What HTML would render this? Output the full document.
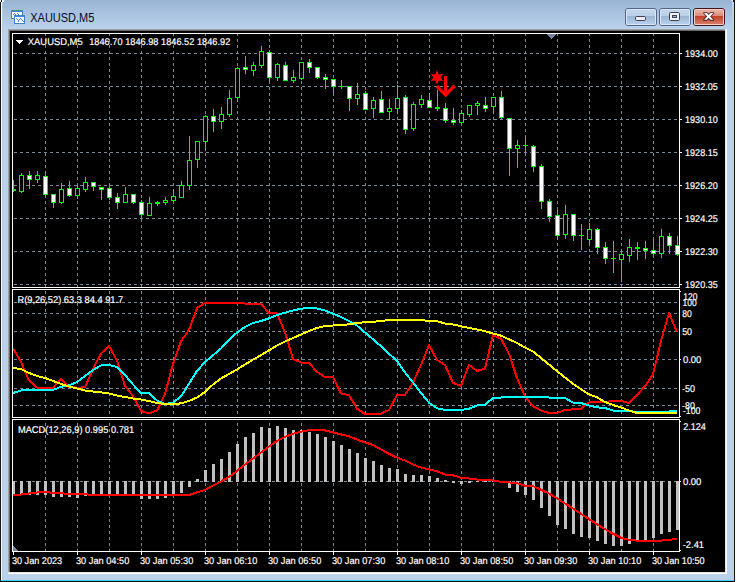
<!DOCTYPE html>
<html><head><meta charset="utf-8"><title>XAUUSD,M5</title>
<style>html,body{margin:0;padding:0;background:#fff;overflow:hidden}body{width:737px;height:582px;font-family:"Liberation Sans",sans-serif}</style></head>
<body>
<svg width="737" height="582" viewBox="0 0 737 582" font-family="'Liberation Sans', sans-serif" style="display:block"><defs><linearGradient id="tb" x1="0" y1="0" x2="0" y2="1"><stop offset="0" stop-color="#99b4d3"/><stop offset="1" stop-color="#bad2ec"/></linearGradient><linearGradient id="bt" x1="0" y1="0" x2="0" y2="1"><stop offset="0" stop-color="#c3d6ec"/><stop offset="1" stop-color="#bbd0e8"/></linearGradient><linearGradient id="bb" x1="0" y1="0" x2="0" y2="1"><stop offset="0" stop-color="#9ab3d1"/><stop offset="1" stop-color="#b6cfea"/></linearGradient><linearGradient id="ct" x1="0" y1="0" x2="0" y2="1"><stop offset="0" stop-color="#eab3a5"/><stop offset="1" stop-color="#d98b78"/></linearGradient><linearGradient id="cb" x1="0" y1="0" x2="0" y2="1"><stop offset="0" stop-color="#bf3f24"/><stop offset="1" stop-color="#d67c66"/></linearGradient></defs>
<g shape-rendering="crispEdges">
<rect x="0" y="0" width="737" height="582" fill="#ffffff"/>
<rect x="0" y="0" width="735" height="582" fill="#b9d1ea"/>
<rect x="0" y="0" width="735" height="29" fill="url(#tb)"/>
<rect x="0" y="2" width="1" height="580" fill="#161616"/>
<rect x="1" y="2" width="1" height="579" fill="#fbfdff"/>
<rect x="2" y="2" width="1" height="578" fill="#b2cae5"/>
<rect x="0" y="0" width="1" height="2" fill="#dfeaf6"/>
<rect x="1" y="0" width="1" height="2" fill="#202020"/>
<rect x="2" y="0" width="2" height="2" fill="#f4f8fc"/>
<rect x="732" y="0" width="1" height="580" fill="#c0cfe9"/>
<rect x="733" y="0" width="1" height="581" fill="#8fe4ff"/>
<rect x="734" y="0" width="1" height="582" fill="#141414"/>
<rect x="735" y="0" width="2" height="582" fill="#ffffff"/>
<rect x="733" y="0" width="1" height="2" fill="#101820"/>
<rect x="731" y="0" width="2" height="1" fill="#c8f2ff"/>
<rect x="2" y="579" width="731" height="1" fill="#bccfe9"/>
<rect x="1" y="580" width="733" height="1" fill="#38d4ff"/>
<rect x="0" y="581" width="735" height="1" fill="#101010"/>
<rect x="8" y="29" width="719" height="545" fill="#ffffff"/>
<rect x="8" y="29" width="718" height="544" fill="#e3e3e3"/>
<rect x="8" y="29" width="717" height="543" fill="#a0a0a0"/>
<rect x="9" y="30" width="716" height="542" fill="#696969"/>
<rect x="10" y="31" width="715" height="541" fill="#000000"/>
</g>
<rect x="625.5" y="8.5" width="31" height="17" rx="2.5" fill="#56668a" stroke="#56668a"/>
<rect x="626" y="9" width="30" height="16" rx="1.5" fill="#d9e6f4"/>
<rect x="627" y="10" width="28" height="6" fill="url(#bt)" shape-rendering="crispEdges"/>
<rect x="627" y="16" width="28" height="8" fill="url(#bb)" shape-rendering="crispEdges"/>
<rect x="659.5" y="8.5" width="31" height="17" rx="2.5" fill="#56668a" stroke="#56668a"/>
<rect x="660" y="9" width="30" height="16" rx="1.5" fill="#d9e6f4"/>
<rect x="661" y="10" width="28" height="6" fill="url(#bt)" shape-rendering="crispEdges"/>
<rect x="661" y="16" width="28" height="8" fill="url(#bb)" shape-rendering="crispEdges"/>
<rect x="693.5" y="8.5" width="31" height="17" rx="2.5" fill="#43121f" stroke="#43121f"/>
<rect x="694" y="9" width="30" height="16" rx="1.5" fill="#f3cfc6"/>
<rect x="695" y="10" width="28" height="6" fill="url(#ct)" shape-rendering="crispEdges"/>
<rect x="695" y="16" width="28" height="8" fill="url(#cb)" shape-rendering="crispEdges"/>
<rect x="635.5" y="16.5" width="10" height="4" rx="1.2" fill="#efefef" stroke="#3b4258"/>
<rect x="669.5" y="12.5" width="10" height="8" rx="1.2" fill="#f2f2f2" stroke="#3b4258"/>
<rect x="672.5" y="15.5" width="4" height="2" fill="#8fb0d8" stroke="#3b4258"/>
<polygon points="704.0,13.0 706.8,13.0 708.7,15.0 710.6,13.0 713.4,13.0 710.2,16.4 713.4,19.8 710.6,19.8 708.7,17.8 706.8,19.8 704.0,19.8 707.2,16.4" fill="#ffffff" stroke="#46222e" stroke-width="1.7" stroke-linejoin="round" paint-order="stroke"/>
<g shape-rendering="crispEdges">
<rect x="11" y="10" width="12" height="9" fill="#3f82ff"/>
<rect x="12" y="12" width="10" height="6" fill="#fffef4"/>
<rect x="13" y="14" width="1" height="1" fill="#3f82ff"/>
<rect x="14" y="13" width="1" height="1" fill="#3f82ff"/>
<rect x="15" y="14" width="1" height="1" fill="#3f82ff"/>
<rect x="17" y="13" width="1" height="1" fill="#3f82ff"/>
<rect x="18" y="14" width="1" height="1" fill="#3f82ff"/>
<rect x="19" y="15" width="1" height="1" fill="#3f82ff"/>
<rect x="12" y="10" width="1" height="1" fill="#2f8f6f"/>
<rect x="14" y="10" width="1" height="1" fill="#2f8f6f"/>
<rect x="16" y="10" width="1" height="1" fill="#2f8f6f"/>
<rect x="18" y="10" width="1" height="1" fill="#2f8f6f"/>
<rect x="20" y="10" width="1" height="1" fill="#2f8f6f"/>
<rect x="11" y="12" width="1" height="1" fill="#3a7f9a"/>
<rect x="22" y="12" width="1" height="1" fill="#3a7f9a"/>
<rect x="11" y="14" width="1" height="1" fill="#3a7f9a"/>
<rect x="22" y="14" width="1" height="1" fill="#3a7f9a"/>
<rect x="11" y="16" width="1" height="1" fill="#3a7f9a"/>
<rect x="22" y="16" width="1" height="1" fill="#3a7f9a"/>
<rect x="12" y="18" width="1" height="1" fill="#3a7f9a"/>
<rect x="14" y="15" width="11" height="9" fill="#3f82ff"/>
<rect x="15" y="17" width="9" height="6" fill="#ffffff"/>
<rect x="16" y="18" width="1" height="1" fill="#3f82ff"/>
<rect x="17" y="19" width="1" height="1" fill="#3f82ff"/>
<rect x="18" y="20" width="1" height="1" fill="#3f82ff"/>
<rect x="19" y="19" width="1" height="1" fill="#3f82ff"/>
<rect x="20" y="18" width="1" height="1" fill="#3f82ff"/>
<rect x="21" y="19" width="1" height="1" fill="#3f82ff"/>
<rect x="22" y="20" width="1" height="1" fill="#3f82ff"/>
<rect x="23" y="21" width="1" height="1" fill="#3f82ff"/>
<rect x="18" y="21" width="1" height="1" fill="#3f82ff"/>
<rect x="15" y="15" width="1" height="1" fill="#2f8f6f"/>
<rect x="18" y="15" width="1" height="1" fill="#2f8f6f"/>
<rect x="22" y="15" width="1" height="1" fill="#2f8f6f"/>
<rect x="14" y="17" width="1" height="1" fill="#3a7f9a"/>
<rect x="24" y="17" width="1" height="1" fill="#3a7f9a"/>
<rect x="14" y="19" width="1" height="1" fill="#3a7f9a"/>
<rect x="24" y="19" width="1" height="1" fill="#3a7f9a"/>
<rect x="14" y="21" width="1" height="1" fill="#3a7f9a"/>
<rect x="24" y="21" width="1" height="1" fill="#3a7f9a"/>
<rect x="16" y="23" width="1" height="1" fill="#3a7f9a"/>
<rect x="18" y="23" width="1" height="1" fill="#3a7f9a"/>
<rect x="20" y="23" width="1" height="1" fill="#3a7f9a"/>
<rect x="22" y="23" width="1" height="1" fill="#3a7f9a"/>
</g>
<text x="30.3" y="21.8" font-size="12" fill="#0a0a1e" textLength="64" lengthAdjust="spacingAndGlyphs">XAUUSD,M5</text>
<g shape-rendering="crispEdges" stroke="#778899" stroke-width="1" stroke-dasharray="3 3" fill="none">
<line x1="14" y1="53.5" x2="679" y2="53.5"/>
<line x1="14" y1="86.5" x2="679" y2="86.5"/>
<line x1="14" y1="119.5" x2="679" y2="119.5"/>
<line x1="14" y1="152.5" x2="679" y2="152.5"/>
<line x1="14" y1="185.5" x2="679" y2="185.5"/>
<line x1="14" y1="218.5" x2="679" y2="218.5"/>
<line x1="14" y1="251.5" x2="679" y2="251.5"/>
<line x1="14" y1="284.5" x2="679" y2="284.5"/>
<line x1="14" y1="302.5" x2="679" y2="302.5"/>
<line x1="14" y1="313.5" x2="679" y2="313.5"/>
<line x1="14" y1="331.5" x2="679" y2="331.5"/>
<line x1="14" y1="359.5" x2="679" y2="359.5"/>
<line x1="14" y1="388.5" x2="679" y2="388.5"/>
<line x1="14" y1="405.5" x2="679" y2="405.5"/>
<line x1="14" y1="481.5" x2="679" y2="481.5"/>
<line x1="45.5" y1="33" x2="45.5" y2="551"/>
<line x1="77.5" y1="33" x2="77.5" y2="551"/>
<line x1="109.5" y1="33" x2="109.5" y2="551"/>
<line x1="141.5" y1="33" x2="141.5" y2="551"/>
<line x1="173.5" y1="33" x2="173.5" y2="551"/>
<line x1="205.5" y1="33" x2="205.5" y2="551"/>
<line x1="237.5" y1="33" x2="237.5" y2="551"/>
<line x1="269.5" y1="33" x2="269.5" y2="551"/>
<line x1="301.5" y1="33" x2="301.5" y2="551"/>
<line x1="333.5" y1="33" x2="333.5" y2="551"/>
<line x1="365.5" y1="33" x2="365.5" y2="551"/>
<line x1="397.5" y1="33" x2="397.5" y2="551"/>
<line x1="429.5" y1="33" x2="429.5" y2="551"/>
<line x1="461.5" y1="33" x2="461.5" y2="551"/>
<line x1="493.5" y1="33" x2="493.5" y2="551"/>
<line x1="525.5" y1="33" x2="525.5" y2="551"/>
<line x1="557.5" y1="33" x2="557.5" y2="551"/>
<line x1="589.5" y1="33" x2="589.5" y2="551"/>
<line x1="621.5" y1="33" x2="621.5" y2="551"/>
<line x1="653.5" y1="33" x2="653.5" y2="551"/>
</g>
<g shape-rendering="crispEdges">
<rect x="547" y="34" width="9" height="1" fill="#71859b"/>
<rect x="548" y="35" width="7" height="1" fill="#71859b"/>
<rect x="549" y="36" width="5" height="1" fill="#71859b"/>
<rect x="550" y="37" width="3" height="1" fill="#71859b"/>
<rect x="551" y="38" width="1" height="1" fill="#71859b"/>
<rect x="13" y="546" width="1" height="1" fill="#71859b"/>
<rect x="13" y="547" width="2" height="1" fill="#71859b"/>
<rect x="13" y="548" width="3" height="1" fill="#71859b"/>
<rect x="13" y="549" width="4" height="1" fill="#71859b"/>
<rect x="13" y="550" width="5" height="1" fill="#71859b"/>
<rect x="12" y="481" width="3" height="14" fill="#c0c0c0"/>
<rect x="20" y="481" width="3" height="14" fill="#c0c0c0"/>
<rect x="28" y="481" width="3" height="14" fill="#c0c0c0"/>
<rect x="36" y="481" width="3" height="14" fill="#c0c0c0"/>
<rect x="44" y="481" width="3" height="14" fill="#c0c0c0"/>
<rect x="52" y="481" width="3" height="16" fill="#c0c0c0"/>
<rect x="60" y="481" width="3" height="16" fill="#c0c0c0"/>
<rect x="68" y="481" width="3" height="16" fill="#c0c0c0"/>
<rect x="76" y="481" width="3" height="17" fill="#c0c0c0"/>
<rect x="84" y="481" width="3" height="15" fill="#c0c0c0"/>
<rect x="92" y="481" width="3" height="14" fill="#c0c0c0"/>
<rect x="100" y="481" width="3" height="14" fill="#c0c0c0"/>
<rect x="108" y="481" width="3" height="14" fill="#c0c0c0"/>
<rect x="116" y="481" width="3" height="14" fill="#c0c0c0"/>
<rect x="124" y="481" width="3" height="14" fill="#c0c0c0"/>
<rect x="132" y="481" width="3" height="15" fill="#c0c0c0"/>
<rect x="140" y="481" width="3" height="18" fill="#c0c0c0"/>
<rect x="148" y="481" width="3" height="18" fill="#c0c0c0"/>
<rect x="156" y="481" width="3" height="18" fill="#c0c0c0"/>
<rect x="164" y="481" width="3" height="17" fill="#c0c0c0"/>
<rect x="172" y="481" width="3" height="15" fill="#c0c0c0"/>
<rect x="180" y="481" width="3" height="12" fill="#c0c0c0"/>
<rect x="188" y="481" width="3" height="6" fill="#c0c0c0"/>
<rect x="196" y="479" width="3" height="3" fill="#c0c0c0"/>
<rect x="204" y="470" width="3" height="12" fill="#c0c0c0"/>
<rect x="212" y="464" width="3" height="18" fill="#c0c0c0"/>
<rect x="220" y="459" width="3" height="23" fill="#c0c0c0"/>
<rect x="228" y="452" width="3" height="30" fill="#c0c0c0"/>
<rect x="236" y="444" width="3" height="38" fill="#c0c0c0"/>
<rect x="244" y="437" width="3" height="45" fill="#c0c0c0"/>
<rect x="252" y="433" width="3" height="49" fill="#c0c0c0"/>
<rect x="260" y="427" width="3" height="55" fill="#c0c0c0"/>
<rect x="268" y="428" width="3" height="54" fill="#c0c0c0"/>
<rect x="276" y="426" width="3" height="56" fill="#c0c0c0"/>
<rect x="284" y="428" width="3" height="54" fill="#c0c0c0"/>
<rect x="292" y="430" width="3" height="52" fill="#c0c0c0"/>
<rect x="300" y="430" width="3" height="52" fill="#c0c0c0"/>
<rect x="308" y="432" width="3" height="50" fill="#c0c0c0"/>
<rect x="316" y="434" width="3" height="48" fill="#c0c0c0"/>
<rect x="324" y="437" width="3" height="45" fill="#c0c0c0"/>
<rect x="332" y="441" width="3" height="41" fill="#c0c0c0"/>
<rect x="340" y="445" width="3" height="37" fill="#c0c0c0"/>
<rect x="348" y="449" width="3" height="33" fill="#c0c0c0"/>
<rect x="356" y="453" width="3" height="29" fill="#c0c0c0"/>
<rect x="364" y="458" width="3" height="24" fill="#c0c0c0"/>
<rect x="372" y="461" width="3" height="21" fill="#c0c0c0"/>
<rect x="380" y="465" width="3" height="17" fill="#c0c0c0"/>
<rect x="388" y="468" width="3" height="14" fill="#c0c0c0"/>
<rect x="396" y="469" width="3" height="13" fill="#c0c0c0"/>
<rect x="404" y="474" width="3" height="8" fill="#c0c0c0"/>
<rect x="412" y="475" width="3" height="7" fill="#c0c0c0"/>
<rect x="420" y="475" width="3" height="7" fill="#c0c0c0"/>
<rect x="428" y="476" width="3" height="6" fill="#c0c0c0"/>
<rect x="436" y="478" width="3" height="4" fill="#c0c0c0"/>
<rect x="444" y="480" width="3" height="2" fill="#c0c0c0"/>
<rect x="452" y="481" width="3" height="2" fill="#c0c0c0"/>
<rect x="460" y="481" width="3" height="3" fill="#c0c0c0"/>
<rect x="468" y="481" width="3" height="2" fill="#c0c0c0"/>
<rect x="476" y="481" width="3" height="1" fill="#c0c0c0"/>
<rect x="484" y="481" width="3" height="1" fill="#c0c0c0"/>
<rect x="492" y="481" width="3" height="1" fill="#c0c0c0"/>
<rect x="500" y="481" width="3" height="2" fill="#c0c0c0"/>
<rect x="508" y="481" width="3" height="7" fill="#c0c0c0"/>
<rect x="516" y="481" width="3" height="11" fill="#c0c0c0"/>
<rect x="524" y="481" width="3" height="14" fill="#c0c0c0"/>
<rect x="532" y="481" width="3" height="19" fill="#c0c0c0"/>
<rect x="540" y="481" width="3" height="27" fill="#c0c0c0"/>
<rect x="548" y="481" width="3" height="35" fill="#c0c0c0"/>
<rect x="556" y="481" width="3" height="44" fill="#c0c0c0"/>
<rect x="564" y="481" width="3" height="48" fill="#c0c0c0"/>
<rect x="572" y="481" width="3" height="53" fill="#c0c0c0"/>
<rect x="580" y="481" width="3" height="56" fill="#c0c0c0"/>
<rect x="588" y="481" width="3" height="57" fill="#c0c0c0"/>
<rect x="596" y="481" width="3" height="60" fill="#c0c0c0"/>
<rect x="604" y="481" width="3" height="63" fill="#c0c0c0"/>
<rect x="612" y="481" width="3" height="65" fill="#c0c0c0"/>
<rect x="620" y="481" width="3" height="65" fill="#c0c0c0"/>
<rect x="628" y="481" width="3" height="63" fill="#c0c0c0"/>
<rect x="636" y="481" width="3" height="61" fill="#c0c0c0"/>
<rect x="644" y="481" width="3" height="59" fill="#c0c0c0"/>
<rect x="652" y="481" width="3" height="57" fill="#c0c0c0"/>
<rect x="660" y="481" width="3" height="53" fill="#c0c0c0"/>
<rect x="668" y="481" width="3" height="51" fill="#c0c0c0"/>
<rect x="676" y="481" width="3" height="49" fill="#c0c0c0"/>
<rect x="13" y="180" width="1" height="12" fill="#00ff00"/>
<rect x="11" y="189" width="5" height="2" fill="#00ff00"/>
<rect x="21" y="173" width="1" height="20" fill="#00ff00"/>
<rect x="19" y="175" width="5" height="17" fill="#00ff00"/>
<rect x="20" y="176" width="3" height="15" fill="#000000"/>
<rect x="29" y="171" width="1" height="18" fill="#00ff00"/>
<rect x="27" y="175" width="5" height="5" fill="#00ff00"/>
<rect x="28" y="176" width="3" height="3" fill="#ffffff"/>
<rect x="37" y="171" width="1" height="12" fill="#00ff00"/>
<rect x="35" y="175" width="5" height="5" fill="#00ff00"/>
<rect x="36" y="176" width="3" height="3" fill="#000000"/>
<rect x="45" y="172" width="1" height="25" fill="#00ff00"/>
<rect x="43" y="176" width="5" height="19" fill="#00ff00"/>
<rect x="44" y="177" width="3" height="17" fill="#ffffff"/>
<rect x="53" y="194" width="1" height="14" fill="#00ff00"/>
<rect x="51" y="194" width="5" height="9" fill="#00ff00"/>
<rect x="52" y="195" width="3" height="7" fill="#ffffff"/>
<rect x="61" y="183" width="1" height="21" fill="#00ff00"/>
<rect x="59" y="189" width="5" height="14" fill="#00ff00"/>
<rect x="60" y="190" width="3" height="12" fill="#000000"/>
<rect x="69" y="181" width="1" height="16" fill="#00ff00"/>
<rect x="67" y="188" width="5" height="8" fill="#00ff00"/>
<rect x="68" y="189" width="3" height="6" fill="#ffffff"/>
<rect x="77" y="185" width="1" height="14" fill="#00ff00"/>
<rect x="75" y="188" width="5" height="8" fill="#00ff00"/>
<rect x="76" y="189" width="3" height="6" fill="#000000"/>
<rect x="85" y="177" width="1" height="15" fill="#00ff00"/>
<rect x="83" y="182" width="5" height="8" fill="#00ff00"/>
<rect x="84" y="183" width="3" height="6" fill="#000000"/>
<rect x="93" y="182" width="1" height="9" fill="#00ff00"/>
<rect x="91" y="182" width="5" height="5" fill="#00ff00"/>
<rect x="92" y="183" width="3" height="3" fill="#ffffff"/>
<rect x="101" y="187" width="1" height="13" fill="#00ff00"/>
<rect x="99" y="187" width="5" height="3" fill="#00ff00"/>
<rect x="100" y="188" width="3" height="1" fill="#ffffff"/>
<rect x="109" y="184" width="1" height="16" fill="#00ff00"/>
<rect x="107" y="188" width="5" height="10" fill="#00ff00"/>
<rect x="108" y="189" width="3" height="8" fill="#ffffff"/>
<rect x="117" y="193" width="1" height="16" fill="#00ff00"/>
<rect x="115" y="197" width="5" height="6" fill="#00ff00"/>
<rect x="116" y="198" width="3" height="4" fill="#ffffff"/>
<rect x="125" y="187" width="1" height="16" fill="#00ff00"/>
<rect x="123" y="194" width="5" height="9" fill="#00ff00"/>
<rect x="124" y="195" width="3" height="7" fill="#000000"/>
<rect x="133" y="194" width="1" height="10" fill="#00ff00"/>
<rect x="131" y="194" width="5" height="9" fill="#00ff00"/>
<rect x="132" y="195" width="3" height="7" fill="#ffffff"/>
<rect x="141" y="200" width="1" height="18" fill="#00ff00"/>
<rect x="139" y="202" width="5" height="13" fill="#00ff00"/>
<rect x="140" y="203" width="3" height="11" fill="#ffffff"/>
<rect x="149" y="197" width="1" height="19" fill="#00ff00"/>
<rect x="147" y="203" width="5" height="13" fill="#00ff00"/>
<rect x="148" y="204" width="3" height="11" fill="#000000"/>
<rect x="157" y="201" width="1" height="5" fill="#00ff00"/>
<rect x="155" y="202" width="5" height="2" fill="#00ff00"/>
<rect x="165" y="197" width="1" height="8" fill="#00ff00"/>
<rect x="163" y="200" width="5" height="3" fill="#00ff00"/>
<rect x="164" y="201" width="3" height="1" fill="#000000"/>
<rect x="173" y="190" width="1" height="12" fill="#00ff00"/>
<rect x="171" y="196" width="5" height="5" fill="#00ff00"/>
<rect x="172" y="197" width="3" height="3" fill="#000000"/>
<rect x="181" y="181" width="1" height="17" fill="#00ff00"/>
<rect x="179" y="185" width="5" height="13" fill="#00ff00"/>
<rect x="180" y="186" width="3" height="11" fill="#000000"/>
<rect x="189" y="136" width="1" height="54" fill="#00ff00"/>
<rect x="187" y="160" width="5" height="26" fill="#00ff00"/>
<rect x="188" y="161" width="3" height="24" fill="#000000"/>
<rect x="197" y="141" width="1" height="27" fill="#00ff00"/>
<rect x="195" y="141" width="5" height="19" fill="#00ff00"/>
<rect x="196" y="142" width="3" height="17" fill="#000000"/>
<rect x="205" y="115" width="1" height="36" fill="#00ff00"/>
<rect x="203" y="116" width="5" height="26" fill="#00ff00"/>
<rect x="204" y="117" width="3" height="24" fill="#000000"/>
<rect x="213" y="109" width="1" height="23" fill="#00ff00"/>
<rect x="211" y="116" width="5" height="6" fill="#00ff00"/>
<rect x="212" y="117" width="3" height="4" fill="#ffffff"/>
<rect x="221" y="107" width="1" height="22" fill="#00ff00"/>
<rect x="219" y="114" width="5" height="8" fill="#00ff00"/>
<rect x="220" y="115" width="3" height="6" fill="#000000"/>
<rect x="229" y="90" width="1" height="27" fill="#00ff00"/>
<rect x="227" y="98" width="5" height="17" fill="#00ff00"/>
<rect x="228" y="99" width="3" height="15" fill="#000000"/>
<rect x="237" y="67" width="1" height="35" fill="#00ff00"/>
<rect x="235" y="68" width="5" height="30" fill="#00ff00"/>
<rect x="236" y="69" width="3" height="28" fill="#000000"/>
<rect x="245" y="56" width="1" height="18" fill="#00ff00"/>
<rect x="243" y="67" width="5" height="3" fill="#00ff00"/>
<rect x="244" y="68" width="3" height="1" fill="#ffffff"/>
<rect x="253" y="62" width="1" height="14" fill="#00ff00"/>
<rect x="251" y="65" width="5" height="6" fill="#00ff00"/>
<rect x="252" y="66" width="3" height="4" fill="#000000"/>
<rect x="261" y="46" width="1" height="22" fill="#00ff00"/>
<rect x="259" y="51" width="5" height="15" fill="#00ff00"/>
<rect x="260" y="52" width="3" height="13" fill="#000000"/>
<rect x="269" y="50" width="1" height="31" fill="#00ff00"/>
<rect x="267" y="52" width="5" height="26" fill="#00ff00"/>
<rect x="268" y="53" width="3" height="24" fill="#ffffff"/>
<rect x="277" y="63" width="1" height="18" fill="#00ff00"/>
<rect x="275" y="64" width="5" height="14" fill="#00ff00"/>
<rect x="276" y="65" width="3" height="12" fill="#000000"/>
<rect x="285" y="62" width="1" height="19" fill="#00ff00"/>
<rect x="283" y="65" width="5" height="16" fill="#00ff00"/>
<rect x="284" y="66" width="3" height="14" fill="#ffffff"/>
<rect x="293" y="70" width="1" height="13" fill="#00ff00"/>
<rect x="291" y="77" width="5" height="4" fill="#00ff00"/>
<rect x="292" y="78" width="3" height="2" fill="#000000"/>
<rect x="301" y="62" width="1" height="18" fill="#00ff00"/>
<rect x="299" y="62" width="5" height="17" fill="#00ff00"/>
<rect x="300" y="63" width="3" height="15" fill="#000000"/>
<rect x="309" y="59" width="1" height="14" fill="#00ff00"/>
<rect x="307" y="62" width="5" height="6" fill="#00ff00"/>
<rect x="308" y="63" width="3" height="4" fill="#ffffff"/>
<rect x="317" y="67" width="1" height="12" fill="#00ff00"/>
<rect x="315" y="67" width="5" height="11" fill="#00ff00"/>
<rect x="316" y="68" width="3" height="9" fill="#ffffff"/>
<rect x="325" y="74" width="1" height="15" fill="#00ff00"/>
<rect x="323" y="77" width="5" height="3" fill="#00ff00"/>
<rect x="324" y="78" width="3" height="1" fill="#ffffff"/>
<rect x="333" y="79" width="1" height="15" fill="#00ff00"/>
<rect x="331" y="79" width="5" height="8" fill="#00ff00"/>
<rect x="332" y="80" width="3" height="6" fill="#ffffff"/>
<rect x="341" y="80" width="1" height="9" fill="#00ff00"/>
<rect x="339" y="86" width="5" height="1" fill="#00ff00"/>
<rect x="349" y="86" width="1" height="25" fill="#00ff00"/>
<rect x="347" y="86" width="5" height="13" fill="#00ff00"/>
<rect x="348" y="87" width="3" height="11" fill="#ffffff"/>
<rect x="357" y="83" width="1" height="22" fill="#00ff00"/>
<rect x="355" y="94" width="5" height="5" fill="#00ff00"/>
<rect x="356" y="95" width="3" height="3" fill="#000000"/>
<rect x="365" y="91" width="1" height="19" fill="#00ff00"/>
<rect x="363" y="93" width="5" height="17" fill="#00ff00"/>
<rect x="364" y="94" width="3" height="15" fill="#ffffff"/>
<rect x="373" y="97" width="1" height="21" fill="#00ff00"/>
<rect x="371" y="100" width="5" height="9" fill="#00ff00"/>
<rect x="372" y="101" width="3" height="7" fill="#000000"/>
<rect x="381" y="91" width="1" height="22" fill="#00ff00"/>
<rect x="379" y="99" width="5" height="14" fill="#00ff00"/>
<rect x="380" y="100" width="3" height="12" fill="#ffffff"/>
<rect x="389" y="99" width="1" height="21" fill="#00ff00"/>
<rect x="387" y="108" width="5" height="4" fill="#00ff00"/>
<rect x="388" y="109" width="3" height="2" fill="#000000"/>
<rect x="397" y="85" width="1" height="29" fill="#00ff00"/>
<rect x="395" y="98" width="5" height="11" fill="#00ff00"/>
<rect x="396" y="99" width="3" height="9" fill="#000000"/>
<rect x="405" y="95" width="1" height="39" fill="#00ff00"/>
<rect x="403" y="97" width="5" height="33" fill="#00ff00"/>
<rect x="404" y="98" width="3" height="31" fill="#ffffff"/>
<rect x="413" y="102" width="1" height="29" fill="#00ff00"/>
<rect x="411" y="104" width="5" height="25" fill="#00ff00"/>
<rect x="412" y="105" width="3" height="23" fill="#000000"/>
<rect x="421" y="95" width="1" height="13" fill="#00ff00"/>
<rect x="419" y="99" width="5" height="6" fill="#00ff00"/>
<rect x="420" y="100" width="3" height="4" fill="#000000"/>
<rect x="429" y="93" width="1" height="15" fill="#00ff00"/>
<rect x="427" y="100" width="5" height="8" fill="#00ff00"/>
<rect x="428" y="101" width="3" height="6" fill="#ffffff"/>
<rect x="437" y="90" width="1" height="21" fill="#00ff00"/>
<rect x="435" y="107" width="5" height="2" fill="#00ff00"/>
<rect x="445" y="103" width="1" height="20" fill="#00ff00"/>
<rect x="443" y="108" width="5" height="13" fill="#00ff00"/>
<rect x="444" y="109" width="3" height="11" fill="#ffffff"/>
<rect x="453" y="108" width="1" height="17" fill="#00ff00"/>
<rect x="451" y="120" width="5" height="3" fill="#00ff00"/>
<rect x="452" y="121" width="3" height="1" fill="#ffffff"/>
<rect x="461" y="110" width="1" height="13" fill="#00ff00"/>
<rect x="459" y="113" width="5" height="10" fill="#00ff00"/>
<rect x="460" y="114" width="3" height="8" fill="#000000"/>
<rect x="469" y="105" width="1" height="12" fill="#00ff00"/>
<rect x="467" y="105" width="5" height="10" fill="#00ff00"/>
<rect x="468" y="106" width="3" height="8" fill="#000000"/>
<rect x="477" y="101" width="1" height="14" fill="#00ff00"/>
<rect x="475" y="103" width="5" height="3" fill="#00ff00"/>
<rect x="476" y="104" width="3" height="1" fill="#000000"/>
<rect x="485" y="97" width="1" height="15" fill="#00ff00"/>
<rect x="483" y="105" width="5" height="4" fill="#00ff00"/>
<rect x="484" y="106" width="3" height="2" fill="#ffffff"/>
<rect x="493" y="97" width="1" height="17" fill="#00ff00"/>
<rect x="491" y="97" width="5" height="10" fill="#00ff00"/>
<rect x="492" y="98" width="3" height="8" fill="#000000"/>
<rect x="501" y="91" width="1" height="29" fill="#00ff00"/>
<rect x="499" y="97" width="5" height="21" fill="#00ff00"/>
<rect x="500" y="98" width="3" height="19" fill="#ffffff"/>
<rect x="509" y="118" width="1" height="58" fill="#00ff00"/>
<rect x="507" y="118" width="5" height="31" fill="#00ff00"/>
<rect x="508" y="119" width="3" height="29" fill="#ffffff"/>
<rect x="517" y="140" width="1" height="28" fill="#00ff00"/>
<rect x="515" y="145" width="5" height="4" fill="#00ff00"/>
<rect x="516" y="146" width="3" height="2" fill="#000000"/>
<rect x="525" y="136" width="1" height="18" fill="#00ff00"/>
<rect x="523" y="145" width="5" height="1" fill="#00ff00"/>
<rect x="533" y="145" width="1" height="27" fill="#00ff00"/>
<rect x="531" y="146" width="5" height="21" fill="#00ff00"/>
<rect x="532" y="147" width="3" height="19" fill="#ffffff"/>
<rect x="541" y="164" width="1" height="45" fill="#00ff00"/>
<rect x="539" y="166" width="5" height="36" fill="#00ff00"/>
<rect x="540" y="167" width="3" height="34" fill="#ffffff"/>
<rect x="549" y="199" width="1" height="23" fill="#00ff00"/>
<rect x="547" y="201" width="5" height="16" fill="#00ff00"/>
<rect x="548" y="202" width="3" height="14" fill="#ffffff"/>
<rect x="557" y="210" width="1" height="30" fill="#00ff00"/>
<rect x="555" y="215" width="5" height="21" fill="#00ff00"/>
<rect x="556" y="216" width="3" height="19" fill="#ffffff"/>
<rect x="565" y="205" width="1" height="34" fill="#00ff00"/>
<rect x="563" y="214" width="5" height="21" fill="#00ff00"/>
<rect x="564" y="215" width="3" height="19" fill="#000000"/>
<rect x="573" y="214" width="1" height="27" fill="#00ff00"/>
<rect x="571" y="214" width="5" height="22" fill="#00ff00"/>
<rect x="572" y="215" width="3" height="20" fill="#ffffff"/>
<rect x="581" y="224" width="1" height="26" fill="#00ff00"/>
<rect x="579" y="235" width="5" height="1" fill="#00ff00"/>
<rect x="589" y="223" width="1" height="23" fill="#00ff00"/>
<rect x="587" y="229" width="5" height="11" fill="#00ff00"/>
<rect x="588" y="230" width="3" height="9" fill="#000000"/>
<rect x="597" y="228" width="1" height="26" fill="#00ff00"/>
<rect x="595" y="229" width="5" height="19" fill="#00ff00"/>
<rect x="596" y="230" width="3" height="17" fill="#ffffff"/>
<rect x="605" y="242" width="1" height="22" fill="#00ff00"/>
<rect x="603" y="247" width="5" height="12" fill="#00ff00"/>
<rect x="604" y="248" width="3" height="10" fill="#ffffff"/>
<rect x="613" y="241" width="1" height="32" fill="#00ff00"/>
<rect x="611" y="258" width="5" height="1" fill="#00ff00"/>
<rect x="621" y="251" width="1" height="31" fill="#00ff00"/>
<rect x="619" y="254" width="5" height="6" fill="#00ff00"/>
<rect x="620" y="255" width="3" height="4" fill="#000000"/>
<rect x="629" y="239" width="1" height="23" fill="#00ff00"/>
<rect x="627" y="247" width="5" height="9" fill="#00ff00"/>
<rect x="628" y="248" width="3" height="7" fill="#000000"/>
<rect x="637" y="242" width="1" height="18" fill="#00ff00"/>
<rect x="635" y="247" width="5" height="2" fill="#00ff00"/>
<rect x="645" y="241" width="1" height="18" fill="#00ff00"/>
<rect x="643" y="248" width="5" height="3" fill="#00ff00"/>
<rect x="644" y="249" width="3" height="1" fill="#ffffff"/>
<rect x="653" y="239" width="1" height="16" fill="#00ff00"/>
<rect x="651" y="250" width="5" height="4" fill="#00ff00"/>
<rect x="652" y="251" width="3" height="2" fill="#ffffff"/>
<rect x="661" y="229" width="1" height="29" fill="#00ff00"/>
<rect x="659" y="236" width="5" height="18" fill="#00ff00"/>
<rect x="660" y="237" width="3" height="16" fill="#000000"/>
<rect x="669" y="233" width="1" height="21" fill="#00ff00"/>
<rect x="667" y="236" width="5" height="10" fill="#00ff00"/>
<rect x="668" y="237" width="3" height="8" fill="#ffffff"/>
<rect x="677" y="236" width="1" height="20" fill="#00ff00"/>
<rect x="675" y="245" width="5" height="10" fill="#00ff00"/>
<rect x="676" y="246" width="3" height="8" fill="#ffffff"/>
</g>
<polyline points="13,348.0 21,362.0 29,380.5 37,387.6 45,387.8 53,387.8 61,378.6 69,386.8 77,387.7 85,387.3 93,369.0 101,353.5 109,346.0 117,360.5 125,386.0 133,396.0 141,411.0 149,413.5 157,410.5 165,394.0 173,364.0 181,341.3 189,330.0 197,308.0 205,303.0 213,303.0 221,303.0 229,303.0 237,303.3 245,303.5 253,303.5 261,303.7 269,313.3 277,313.5 285,332.5 293,359.0 301,362.5 309,363.0 317,372.0 325,377.0 333,377.0 341,393.5 349,395.0 357,408.7 365,414.0 373,414.3 381,413.7 389,410.0 397,395.0 405,395.0 413,382.5 421,365.0 429,345.0 437,360.0 445,365.0 453,383.0 461,386.0 469,364.7 477,371.0 485,368.6 493,335.0 501,338.7 509,353.7 517,378.0 525,396.2 533,406.2 541,410.5 549,413.0 557,413.0 565,410.0 573,409.3 581,408.7 589,402.5 597,402.0 605,402.0 613,401.0 621,401.0 629,403.0 637,395.0 645,386.0 653,374.5 661,341.0 669,313.0 677,332.0" fill="none" stroke="#ff0000" stroke-width="2" stroke-linejoin="round" shape-rendering="crispEdges"/>
<polyline points="13,393.0 21,390.5 29,389.8 37,389.7 45,390.0 53,390.0 61,386.8 69,385.3 77,382.0 85,376.0 93,370.0 101,365.5 109,365.0 117,367.0 125,375.0 133,384.5 141,393.0 149,393.0 157,400.5 165,404.0 173,402.5 181,396.5 189,383.7 197,371.0 205,362.0 213,355.3 221,348.5 229,340.0 237,332.5 245,327.0 253,323.0 261,321.0 269,318.3 277,315.0 285,312.7 293,310.5 301,308.7 309,308.0 317,308.5 325,310.5 333,313.7 341,317.0 349,321.0 357,325.6 365,332.5 373,339.3 381,346.2 389,353.7 397,361.0 405,372.5 413,382.5 421,393.0 429,402.7 437,408.3 445,410.0 453,410.0 461,410.0 469,408.7 477,405.5 485,404.7 493,398.0 501,397.5 509,397.0 517,397.0 525,397.0 533,397.0 541,397.0 549,397.5 557,398.0 565,398.0 573,402.5 581,403.0 589,405.5 597,407.3 605,408.0 613,410.5 621,410.5 629,411.0 637,412.0 645,412.0 653,412.0 661,412.0 669,411.5 677,410.5" fill="none" stroke="#00ffff" stroke-width="2" stroke-linejoin="round" shape-rendering="crispEdges"/>
<polyline points="13,368.0 21,369.0 29,373.0 37,376.0 45,378.0 53,381.0 61,384.0 69,386.5 77,388.5 85,390.5 93,391.5 101,392.3 109,393.5 117,395.5 125,397.0 133,398.5 141,399.5 149,401.0 157,403.0 165,404.0 173,404.5 181,403.3 189,401.0 197,397.5 205,392.0 213,384.5 221,378.5 229,374.0 237,369.5 245,364.5 253,359.6 261,355.2 269,350.3 277,345.5 285,341.5 293,338.0 301,334.5 309,331.0 317,328.0 325,326.0 333,325.5 341,325.0 349,324.3 357,323.0 365,322.2 373,321.8 381,321.0 389,320.0 397,319.7 405,319.7 413,319.7 421,320.0 429,321.0 437,321.2 445,323.5 453,324.5 461,326.2 469,328.0 477,329.5 485,331.2 493,333.5 501,335.6 509,339.3 517,343.0 525,347.5 533,351.5 541,358.0 549,364.5 557,371.2 565,377.5 573,383.7 581,389.3 589,394.3 597,397.3 605,402.0 613,405.0 621,407.5 629,410.5 637,413.0 645,413.0 653,413.0 661,413.0 669,413.0 677,413.0" fill="none" stroke="#ffff00" stroke-width="2" stroke-linejoin="round" shape-rendering="crispEdges"/>
<polyline points="13,495.0 21,494.5 29,493.5 37,492.5 45,491.7 53,493.0 61,493.0 69,494.2 77,494.2 85,494.2 93,495.0 101,495.0 109,495.0 117,495.0 125,495.0 133,495.0 141,495.0 149,495.0 157,495.0 165,495.0 173,495.0 181,495.0 189,495.0 197,492.3 205,490.0 213,485.5 221,481.5 229,477.0 237,471.0 245,464.5 253,458.5 261,452.5 269,446.5 277,441.0 285,437.0 293,433.7 301,431.7 309,430.2 317,429.8 325,430.4 333,432.4 341,434.4 349,436.3 357,439.6 365,442.4 373,445.0 381,449.4 389,453.9 397,457.6 405,460.5 413,464.4 421,467.6 429,469.4 437,471.3 445,474.5 453,475.3 461,477.8 469,478.5 477,479.5 485,479.8 493,480.5 501,481.8 509,482.4 517,483.2 525,485.7 533,486.0 541,489.7 549,493.6 557,498.1 565,503.4 573,508.6 581,513.8 589,519.0 597,524.3 605,529.0 613,533.9 621,537.7 629,539.8 637,540.6 645,540.6 653,540.6 661,540.6 669,540.0 677,538.8" fill="none" stroke="#ff0000" stroke-width="2" stroke-linejoin="round" shape-rendering="crispEdges"/>
<polygon points="437.00,70.10 438.73,74.41 443.32,73.75 440.45,77.40 443.32,81.05 438.73,80.39 437.00,84.70 435.27,80.39 430.68,81.05 433.55,77.40 430.68,73.75 435.27,74.41" fill="#ff0000"/>
<path d="M445.5 76 L445.5 95.5" stroke="#ff0000" stroke-width="3" fill="none" shape-rendering="crispEdges"/>
<path d="M436.8 86.2 L445.6 95.2 L454.6 85.6" stroke="#ff0000" stroke-width="3.3" fill="none" stroke-linejoin="miter"/>
<g shape-rendering="crispEdges">
<rect x="10" y="288" width="715" height="1" fill="#000000"/>
<rect x="10" y="418" width="715" height="1" fill="#000000"/>
<rect x="680" y="31" width="45" height="541" fill="#000000"/>
<rect x="10" y="552" width="715" height="20" fill="#000000"/>
<rect x="10" y="31" width="2" height="541" fill="#000000"/>
<rect x="12" y="33" width="668" height="1" fill="#ffffff"/>
<rect x="12" y="287" width="668" height="1" fill="#ffffff"/>
<rect x="12" y="33" width="1" height="255" fill="#ffffff"/>
<rect x="679" y="33" width="1" height="255" fill="#ffffff"/>
<rect x="12" y="289" width="668" height="1" fill="#ffffff"/>
<rect x="12" y="417" width="668" height="1" fill="#ffffff"/>
<rect x="12" y="289" width="1" height="129" fill="#ffffff"/>
<rect x="679" y="289" width="1" height="129" fill="#ffffff"/>
<rect x="12" y="419" width="668" height="1" fill="#ffffff"/>
<rect x="12" y="551" width="668" height="1" fill="#ffffff"/>
<rect x="12" y="419" width="1" height="133" fill="#ffffff"/>
<rect x="679" y="419" width="1" height="133" fill="#ffffff"/>
<rect x="680" y="53" width="2" height="1" fill="#ffffff"/>
<rect x="680" y="86" width="2" height="1" fill="#ffffff"/>
<rect x="680" y="119" width="2" height="1" fill="#ffffff"/>
<rect x="680" y="152" width="2" height="1" fill="#ffffff"/>
<rect x="680" y="185" width="2" height="1" fill="#ffffff"/>
<rect x="680" y="218" width="2" height="1" fill="#ffffff"/>
<rect x="680" y="251" width="2" height="1" fill="#ffffff"/>
<rect x="680" y="284" width="2" height="1" fill="#ffffff"/>
<rect x="680" y="359" width="1" height="1" fill="#ffffff"/>
<rect x="680" y="481" width="1" height="1" fill="#ffffff"/>
<rect x="680" y="291" width="1" height="1" fill="#ffffff"/>
<rect x="680" y="416" width="1" height="1" fill="#ffffff"/>
<rect x="680" y="421" width="1" height="1" fill="#ffffff"/>
<rect x="680" y="550" width="1" height="1" fill="#ffffff"/>
<rect x="13" y="552" width="1" height="3" fill="#ffffff"/>
<rect x="77" y="552" width="1" height="3" fill="#ffffff"/>
<rect x="141" y="552" width="1" height="3" fill="#ffffff"/>
<rect x="205" y="552" width="1" height="3" fill="#ffffff"/>
<rect x="269" y="552" width="1" height="3" fill="#ffffff"/>
<rect x="333" y="552" width="1" height="3" fill="#ffffff"/>
<rect x="397" y="552" width="1" height="3" fill="#ffffff"/>
<rect x="461" y="552" width="1" height="3" fill="#ffffff"/>
<rect x="525" y="552" width="1" height="3" fill="#ffffff"/>
<rect x="589" y="552" width="1" height="3" fill="#ffffff"/>
<rect x="653" y="552" width="1" height="3" fill="#ffffff"/>
<rect x="16" y="40" width="7" height="1" fill="#ffffff"/>
<rect x="17" y="41" width="5" height="1" fill="#ffffff"/>
<rect x="18" y="42" width="3" height="1" fill="#ffffff"/>
<rect x="19" y="43" width="1" height="1" fill="#ffffff"/>
</g>
<g font-size="9.8" fill="#ffffff" stroke="#ffffff" stroke-width="0.18" style="text-rendering:geometricPrecision">
<text transform="translate(27.78,45) scale(0.9604,1)">XAUUSD,M5</text>
<text transform="translate(89.23,45) scale(0.9413,1)">1846.70 1846.98 1846.52 1846.92</text>
<text transform="translate(17.43,303) scale(0.9472,1)">R(9,26,52) 63.3 84.4 91.7</text>
<text transform="translate(17.93,433) scale(0.9485,1)">MACD(12,26,9) 0.995 0.781</text>
<text transform="translate(685.04,57) scale(0.9241,1)">1934.00</text>
<text transform="translate(685.04,90) scale(0.9241,1)">1932.05</text>
<text transform="translate(685.04,123) scale(0.9241,1)">1930.10</text>
<text transform="translate(685.04,156) scale(0.9241,1)">1928.15</text>
<text transform="translate(685.04,189) scale(0.9241,1)">1926.20</text>
<text transform="translate(685.04,222) scale(0.9241,1)">1924.25</text>
<text transform="translate(685.04,255) scale(0.9241,1)">1922.30</text>
<text transform="translate(685.04,288) scale(0.9241,1)">1920.35</text>
<text transform="translate(683.36,300) scale(0.8689,1)">120</text>
<text transform="translate(682.56,306) scale(0.8658,1)">100</text>
<text transform="translate(682.18,317) scale(0.8692,1)">80</text>
<text transform="translate(682.16,335) scale(0.9074,1)">50</text>
<text transform="translate(682.89,363) scale(0.9716,1)">0.00</text>
<text transform="translate(682.06,392) scale(0.9078,1)">-50</text>
<text transform="translate(682.06,409) scale(0.9078,1)">-80</text>
<text transform="translate(682.87,414) scale(0.8984,1)">-100</text>
<text transform="translate(683.16,430) scale(0.9278,1)">2.124</text>
<text transform="translate(682.89,485) scale(0.9716,1)">0.00</text>
<text transform="translate(682.75,548) scale(0.9522,1)">-2.41</text>
<text transform="translate(11.91,564) scale(0.9303,1)">30 Jan 2023</text>
<text transform="translate(75.96,564) scale(0.9409,1)">30 Jan 04:50</text>
<text transform="translate(139.96,564) scale(0.9409,1)">30 Jan 05:30</text>
<text transform="translate(203.96,564) scale(0.9409,1)">30 Jan 06:10</text>
<text transform="translate(267.96,564) scale(0.9409,1)">30 Jan 06:50</text>
<text transform="translate(331.96,564) scale(0.9409,1)">30 Jan 07:30</text>
<text transform="translate(395.96,564) scale(0.9409,1)">30 Jan 08:10</text>
<text transform="translate(459.96,564) scale(0.9409,1)">30 Jan 08:50</text>
<text transform="translate(523.96,564) scale(0.9409,1)">30 Jan 09:30</text>
<text transform="translate(587.96,564) scale(0.9409,1)">30 Jan 10:10</text>
<text transform="translate(651.96,564) scale(0.9294,1)">30 Jan 10:50</text>
</g></svg>
</body></html>
